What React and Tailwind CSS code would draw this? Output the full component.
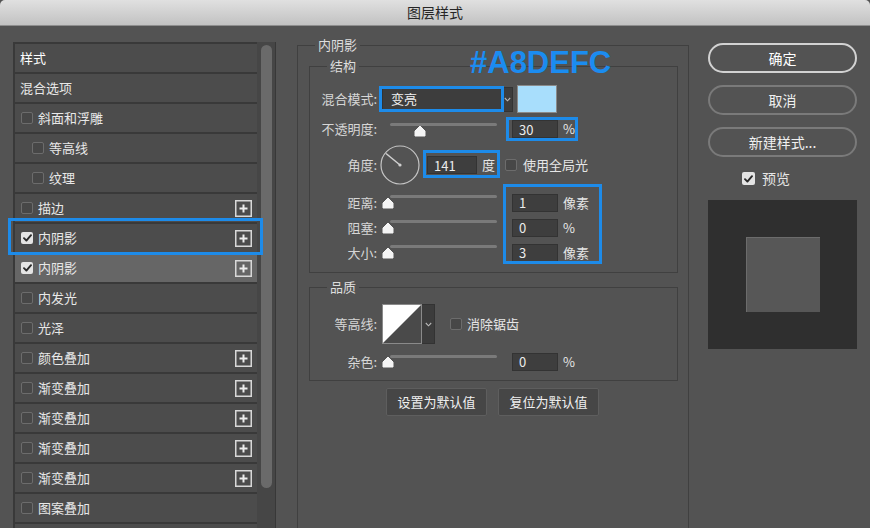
import React from "react";

const rows = [
    { label: "样式", noBox: true, strong: true },
    { label: "混合选项", noBox: true },
    { label: "斜面和浮雕" },
    { label: "等高线", indent: true },
    { label: "纹理", indent: true },
    { label: "描边", plus: true },
    { label: "内阴影", checked: true, plus: true },
    { label: "内阴影", checked: true, plus: true, selected: true },
    { label: "内发光" },
    { label: "光泽" },
    { label: "颜色叠加", plus: true },
    { label: "渐变叠加", plus: true },
    { label: "渐变叠加", plus: true },
    { label: "渐变叠加", plus: true },
    { label: "渐变叠加", plus: true },
    { label: "图案叠加" },
    { label: "", noBox: true },
];

const CheckBox = ({ checked, size = 12 }) => (
    checked ? (
        <span className={`${size === 13 ? "w-[13px] h-[13px]" : "w-[12px] h-[12px]"} shrink-0 rounded-[2px] bg-[#e4e4e4] flex items-center justify-center`}>
            <svg width="9" height="8" viewBox="0 0 9 8">
                <path d="M1 4.2 L3.4 6.6 L8 1.2" stroke="#2a2a2a" strokeWidth="1.9" fill="none" strokeLinecap="round" strokeLinejoin="round" />
            </svg>
        </span>
    ) : (
        <span className="w-[12px] h-[12px] shrink-0 rounded-[2px] bg-[#474747] border border-[#6c6c6c]"></span>
    )
);

const PlusIcon = () => (
    <svg width="17" height="17" viewBox="0 0 17 17" className="shrink-0">
        <rect x="0.75" y="0.75" width="15.5" height="15.5" fill="none" stroke="#d8d8d8" strokeWidth="1.5" />
        <path d="M4.5 8.5h8M8.5 4.5v8" stroke="#ececec" strokeWidth="2" />
    </svg>
);

const Thumb = () => (
    <svg width="12" height="12" viewBox="0 0 12 12">
        <path d="M6 1 L11 6 V11 H1 V6 Z" fill="#f4f4f4" stroke="#f4f4f4" strokeWidth="1" strokeLinejoin="round" />
    </svg>
);

const Slider = ({ at = 0, trackTop = "top-[5px]", thumbTop = "top-[7px]" }) => (
    <div className="relative ml-[5px] w-[115px] h-full shrink-0">
        <div className={`absolute left-[8px] right-0 ${trackTop} h-[3px] bg-[#7a7a7a] rounded-full`}></div>
        <div className={`absolute ${thumbTop}`} style={{ left: at }}>
            <Thumb />
        </div>
    </div>
);

const Field = ({ value, wide }) => (
    <div className={`${wide ? "w-[50px]" : "w-[46px]"} h-[18px] shrink-0 bg-[#3e3e3e] border border-[#333] flex items-center pl-[6px] text-[13px] text-[#ececec] leading-none`}>
        {value}
    </div>
);

const Label = ({ children }) => (
    <span className="w-[67px] shrink-0 text-right text-[#d6d6d6]">{children}</span>
);

const Chevron = () => (
    <svg width="7" height="5" viewBox="0 0 7 5">
        <path d="M0.8 1 L3.5 3.8 L6.2 1" stroke="#b8b8b8" strokeWidth="1.1" fill="none" />
    </svg>
);

export default function App() {
    return (
        <div className="relative w-[870px] h-[528px] overflow-hidden bg-[#535353] font-['Noto_Sans_CJK_SC',sans-serif] text-[13px] text-[#e6e6e6]">
            {/* title bar */}
            <div className="h-[26px] rounded-t-[5px] bg-[linear-gradient(#e0e0e0,#c2c2c2)] border-b border-[#8e8e8e] flex items-center justify-center text-[14px] text-[#262626]">
                图层样式
            </div>

            <div className="flex pl-[13px] pt-[16px]">
                {/* left styles list */}
                <div className="flex w-[263px] shrink-0 h-[520px]">
                    <div className="w-[244px] bg-[#393939] border-l-2 border-[#393939] pt-[2px] flex flex-col gap-[2px]">
                        {rows.map((r, i) => (
                            <div
                                key={i}
                                className={`h-[28px] shrink-0 flex items-center justify-between pr-[5px] ${r.selected ? "bg-[#666666]" : "bg-[#4c4c4c]"} ${r.noBox ? "pl-[5px]" : r.indent ? "pl-[17px]" : "pl-[6px]"}`}
                            >
                                <div className="flex items-center">
                                    {!r.noBox && <CheckBox checked={r.checked} />}
                                    <span className={`${r.noBox ? "" : "ml-[5px]"} ${r.strong ? "text-white" : "text-[#e8e8e8]"}`}>{r.label}</span>
                                </div>
                                {r.plus && <PlusIcon />}
                            </div>
                        ))}
                    </div>
                    <div className="w-[19px] bg-[#464646] border-r border-[#383838] pt-[3px] pl-[4px]">
                        <div className="w-[11px] h-[443px] rounded-full bg-[#6a6a6a]"></div>
                    </div>
                </div>

                {/* middle settings */}
                <div className="ml-[21px] w-[392px] shrink-0 mt-[-5px]">
                    <fieldset className="border border-[#404040] h-[560px]">
                        <legend className="ml-[17px] px-[3px] leading-[16px] text-[#dedede]">内阴影</legend>

                        <fieldset className="ml-[11px] mr-[10px] mt-[5px] border border-[#404040] pb-[7px]">
                            <legend className="ml-[17px] px-[3px] leading-[16px] text-[#dedede]">结构</legend>

                            <div className="mt-[12px] h-[26px] flex items-center">
                                <Label>混合模式:</Label>
                                <div className="ml-[5px] w-[131px] h-[25px] bg-[#3d3d3d] border border-[#333] flex">
                                    <span className="flex-1 pl-[8px] flex items-center text-[#f0f0f0]">变亮</span>
                                    <span className="w-[10px] border-l border-[#4a4a4a] flex items-center justify-center">
                                        <Chevron />
                                    </span>
                                </div>
                                <div className="ml-[4px] w-[40px] h-[28px] bg-[#a8defc] border border-[#8a8a8a]"></div>
                            </div>

                            <div className="mt-[5px] h-[24px] flex items-center">
                                <Label>不透明度:</Label>
                                <Slider at={32} trackTop="top-[6px]" thumbTop="top-[8px]" />
                                <div className="ml-[15px]"><Field value="30" /></div>
                                <span className="ml-[5px]">%</span>
                            </div>

                            <div className="mt-[4px] h-[40px] flex items-center">
                                <Label>角度:</Label>
                                <svg width="40" height="40" viewBox="0 0 40 40" className="ml-[3px] shrink-0">
                                    <circle cx="20" cy="20" r="19" fill="none" stroke="#c4c4c4" strokeWidth="1.2" />
                                    <path d="M20 20 L6 8.5" stroke="#d0d0d0" strokeWidth="1.5" />
                                    <circle cx="20" cy="20" r="1.6" fill="#d0d0d0" />
                                </svg>
                                <div className="ml-[7px]"><Field value="141" wide /></div>
                                <span className="ml-[5px]">度</span>
                                <span className="ml-[10px] flex items-center">
                                    <CheckBox />
                                    <span className="ml-[6px]">使用全局光</span>
                                </span>
                            </div>

                            <div className="mt-[5px] h-[25px] flex items-center">
                                <Label>距离:</Label>
                                <Slider />
                                <div className="ml-[15px]"><Field value="1" /></div>
                                <span className="ml-[5px]">像素</span>
                            </div>
                            <div className="h-[25px] flex items-center">
                                <Label>阻塞:</Label>
                                <Slider />
                                <div className="ml-[15px]"><Field value="0" /></div>
                                <span className="ml-[5px]">%</span>
                            </div>
                            <div className="h-[25px] flex items-center">
                                <Label>大小:</Label>
                                <Slider />
                                <div className="ml-[15px]"><Field value="3" /></div>
                                <span className="ml-[5px]">像素</span>
                            </div>
                        </fieldset>

                        <fieldset className="ml-[11px] mr-[10px] mt-[6px] border border-[#404040] pb-[6px]">
                            <legend className="ml-[17px] px-[3px] leading-[16px] text-[#dedede]">品质</legend>

                            <div className="mt-[9px] h-[40px] flex items-center">
                                <Label>等高线:</Label>
                                <div className="ml-[5px] flex h-[40px]">
                                    <svg width="40" height="40" viewBox="0 0 40 40">
                                        <rect x="0" y="0" width="40" height="40" fill="#4a4a4a" />
                                        <path d="M1 1 H39 L1 39 Z" fill="#ffffff" />
                                        <rect x="0.5" y="0.5" width="39" height="39" fill="none" stroke="#8a8a8a" />
                                    </svg>
                                    <span className="w-[13px] bg-[#3c3c3c] border border-l-0 border-[#333] flex items-center justify-center">
                                        <Chevron />
                                    </span>
                                </div>
                                <span className="ml-[15px] flex items-center">
                                    <CheckBox />
                                    <span className="ml-[5px]">消除锯齿</span>
                                </span>
                            </div>

                            <div className="mt-[5px] h-[25px] flex items-center">
                                <Label>杂色:</Label>
                                <Slider trackTop="top-[6px]" thumbTop="top-[7px]" />
                                <div className="ml-[15px]"><Field value="0" /></div>
                                <span className="ml-[5px]">%</span>
                            </div>
                        </fieldset>

                        <div className="mt-[7px] ml-[88px] flex gap-[11px]">
                            <button className="w-[101px] h-[28px] bg-[#464646] border border-[#5e5e5e] rounded-[2px] text-[13px] text-[#f0f0f0]">设置为默认值</button>
                            <button className="w-[101px] h-[28px] bg-[#464646] border border-[#5e5e5e] rounded-[2px] text-[13px] text-[#f0f0f0]">复位为默认值</button>
                        </div>
                    </fieldset>
                </div>

                {/* right column */}
                <div className="ml-[19px] w-[149px] shrink-0 mt-[1px] flex flex-col">
                    <button className="h-[30px] rounded-full border-2 border-[#d2d2d2] text-[14px] text-white">确定</button>
                    <button className="mt-[12px] h-[30px] rounded-full border-2 border-[#7a7a7a] text-[14px] text-[#f0f0f0]">取消</button>
                    <button className="mt-[12px] h-[30px] rounded-full border-2 border-[#7a7a7a] text-[14px] text-[#f0f0f0]">新建样式...</button>
                    <div className="mt-[15px] h-[13px] pl-[34px] flex items-center">
                        <CheckBox checked size={13} />
                        <span className="ml-[7px] text-[14px]">预览</span>
                    </div>
                    <div className="mt-[15px] h-[149px] bg-[#2f2f2f] flex items-center justify-center">
                        <div className="w-[74px] h-[75px] bg-[#575757] border-t border-l border-[#6c6c6c]"></div>
                    </div>
                </div>
            </div>

            {/* annotation overlays */}
            <div className="absolute left-[470px] top-[47px] font-['Liberation_Sans',sans-serif] font-bold text-[31px] leading-[31px] text-[#1b8cf0]">#A8DEFC</div>
            <div className="absolute left-[8px] top-[218px] w-[255px] h-[37px] border-[3px] border-[#1d8be9]"></div>
            <div className="absolute left-[379px] top-[86px] w-[125px] h-[26px] border-[3px] border-[#1d8be9]"></div>
            <div className="absolute left-[506px] top-[117px] w-[72px] h-[24px] border-[3px] border-[#1d8be9]"></div>
            <div className="absolute left-[423px] top-[150px] w-[77px] h-[28px] border-[3px] border-[#1d8be9]"></div>
            <div className="absolute left-[503px] top-[184px] w-[99px] h-[80px] border-[3px] border-[#1d8be9]"></div>
        </div>
    );
}
